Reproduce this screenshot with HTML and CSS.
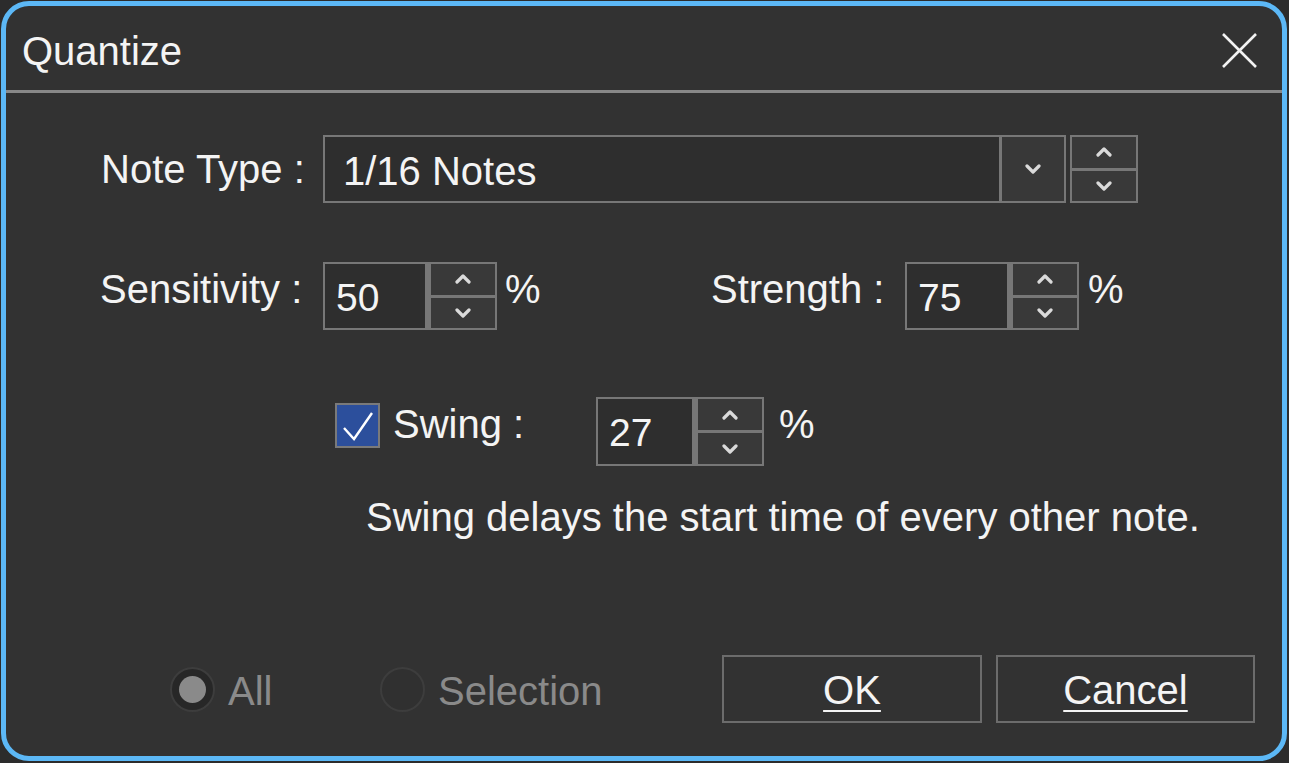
FILE: index.html
```html
<!DOCTYPE html>
<html lang="en">
<head>
    <meta charset="UTF-8">
    <title>Quantize</title>
    <link rel="stylesheet" href="styles.css">
</head>
<body>

<div class="dialog">
    <div class="titlebar">
        <span class="title">Quantize</span>
        <button class="close" aria-label="Close">
            <svg width="35" height="35" viewBox="0 0 35 35"><path d="M1 1 L34 34 M34 1 L1 34" stroke="#f2f2f2" stroke-width="2.6" fill="none"/></svg>
        </button>
    </div>

    <div class="content">
        <div class="row row-type">
            <label class="field-label label-type">Note Type :</label>
            <div class="select">
                <div class="select-value">1/16 Notes</div>
                <div class="select-arrow">
                    <svg width="18" height="10" viewBox="0 0 18 10"><path d="M3 2 L9 8 L15 2" class="chev"/></svg>
                </div>
            </div>
            <div class="steps steps-boxed">
                <button><svg width="18" height="10" viewBox="0 0 18 10"><path d="M3 8 L9 2 L15 8" class="chev"/></svg></button>
                <button><svg width="18" height="10" viewBox="0 0 18 10"><path d="M3 2 L9 8 L15 2" class="chev"/></svg></button>
            </div>
        </div>

        <div class="row row-values">
            <div class="group group-sens">
                <label class="field-label label-sens">Sensitivity :</label>
                <div class="spin">
                    <div class="spin-value">50</div>
                    <div class="steps">
                        <button><svg width="18" height="10" viewBox="0 0 18 10"><path d="M3 8 L9 2 L15 8" class="chev"/></svg></button>
                        <button><svg width="18" height="10" viewBox="0 0 18 10"><path d="M3 2 L9 8 L15 2" class="chev"/></svg></button>
                    </div>
                </div>
                <span class="unit">%</span>
            </div>
            <div class="group">
                <label class="field-label label-strength">Strength :</label>
                <div class="spin">
                    <div class="spin-value">75</div>
                    <div class="steps">
                        <button><svg width="18" height="10" viewBox="0 0 18 10"><path d="M3 8 L9 2 L15 8" class="chev"/></svg></button>
                        <button><svg width="18" height="10" viewBox="0 0 18 10"><path d="M3 2 L9 8 L15 2" class="chev"/></svg></button>
                    </div>
                </div>
                <span class="unit unit-strength">%</span>
            </div>
        </div>

        <div class="row row-swing">
            <span class="checkbox">
                <svg width="41" height="41" viewBox="0 0 41 41"><path d="M7 23 L17 34 L35 8" stroke="#fff" stroke-width="2.4" fill="none"/></svg>
            </span>
            <label class="field-label label-swing">Swing :</label>
            <div class="spin spin-swing">
                <div class="spin-value">27</div>
                <div class="steps">
                    <button><svg width="18" height="10" viewBox="0 0 18 10"><path d="M3 8 L9 2 L15 8" class="chev"/></svg></button>
                    <button><svg width="18" height="10" viewBox="0 0 18 10"><path d="M3 2 L9 8 L15 2" class="chev"/></svg></button>
                </div>
            </div>
            <span class="unit unit-swing">%</span>
        </div>

        <p class="hint">Swing delays the start time of every other note.</p>

        <div class="footer">
            <div class="radio-item radio-all">
                <span class="radio radio-on"><span class="radio-dot"></span></span>
                <span class="radio-text">All</span>
            </div>
            <div class="radio-item radio-sel">
                <span class="radio"></span>
                <span class="radio-text">Selection</span>
            </div>
            <button class="btn">OK</button>
            <button class="btn btn-cancel">Cancel</button>
        </div>
    </div>
</div>

</body>
</html>
```
FILE: styles.css
```css
* {
    box-sizing: border-box;
}
body {
    margin: 0;
    background: #2c2c2c;
    font-family: "Liberation Sans", Arial, Helvetica, sans-serif;
    color: #f4f4f4;
}
button {
    font-family: inherit;
    color: inherit;
}
.dialog {
    margin: 1px 0 0 1px;
    width: 1286px;
    height: 760px;
    border: 5px solid #5cb8f6;
    border-radius: 28px;
    background: #323232;
    overflow: hidden;
    display: flex;
    flex-direction: column;
}
.titlebar {
    height: 87px;
    border-bottom: 3px solid #888;
    display: flex;
    align-items: center;
    justify-content: space-between;
    padding: 5px 25px 0 16px;
}
.title {
    font-size: 40px;
    line-height: 1;
}
.close {
    width: 35px;
    height: 35px;
    padding: 0;
    border: 0;
    background: none;
}
.close svg {
    display: block;
}
.content {
    padding-top: 42px;
    display: flex;
    flex-direction: column;
}
.row {
    display: flex;
    align-items: center;
}
.field-label {
    font-size: 40px;
    line-height: 46px;
    white-space: nowrap;
}
.chev {
    fill: none;
    stroke: #dadada;
    stroke-width: 3.2;
    stroke-linecap: round;
    stroke-linejoin: round;
}

/* note type row */
.row-type {
    height: 68px;
    padding-left: 95px;
}
.label-type {
    width: 222px;
}
.select {
    display: flex;
    width: 743px;
    height: 68px;
    border: 2px solid #777;
    background: #2e2e2e;
}
.select-value {
    flex: 1;
    display: flex;
    align-items: center;
    padding: 4px 0 0 18px;
    font-size: 40px;
}
.select-arrow {
    width: 65px;
    border-left: 3px solid #777;
    background: #383838;
    display: flex;
    align-items: center;
    justify-content: center;
}
.steps {
    width: 64px;
    display: grid;
    grid-template-rows: 1fr 1fr;
    gap: 3px;
}
.steps button {
    border: 0;
    padding: 0;
    background: #393939;
    display: flex;
    align-items: center;
    justify-content: center;
}
.steps-boxed {
    width: 68px;
    height: 68px;
    margin-left: 4px;
    padding: 2px;
    background: #777;
}

/* spin boxes */
.spin {
    display: flex;
    gap: 6px;
    width: 174px;
    height: 68px;
    padding: 2px;
    background: #777;
}
.spin-value {
    width: 100px;
    background: #2e2e2e;
    display: flex;
    align-items: center;
    padding: 3px 0 0 11px;
    font-size: 39px;
}
.unit {
    font-size: 40px;
    line-height: 46px;
    margin: 0 0 14px 8px;
}

.row-values {
    margin-top: 59px;
    padding-left: 94px;
}
.group {
    display: flex;
    align-items: center;
}
.group-sens {
    width: 611px;
}
.label-sens {
    width: 223px;
    margin-bottom: 14px;
}
.label-strength {
    width: 194px;
    margin-bottom: 14px;
}
.unit-strength {
    margin-left: 9px;
}

/* swing row */
.row-swing {
    margin-top: 67px;
    height: 69px;
    padding-left: 329px;
}
.checkbox {
    width: 45px;
    height: 45px;
    border: 2px solid #7a7a7a;
    background: #2c4f9c;
    margin-bottom: 12px;
}
.checkbox svg {
    display: block;
}
.label-swing {
    width: 216px;
    padding-left: 13px;
    margin-bottom: 16px;
}
.spin-swing {
    width: 168px;
    height: 69px;
}
.spin-swing .spin-value {
    width: 94px;
}
.unit-swing {
    margin: 0 0 15px 15px;
}

.hint {
    margin: 28px 0 0 360px;
    font-size: 40px;
    line-height: 46px;
}

/* footer */
.footer {
    margin-top: 115px;
    height: 68px;
    padding-left: 164px;
    display: flex;
    align-items: center;
}
.radio-item {
    display: flex;
    align-items: center;
}
.radio-all {
    width: 210px;
}
.radio-sel {
    width: 342px;
}
.radio {
    width: 45px;
    height: 45px;
    border-radius: 50%;
    border: 2px solid #3d3d3d;
    background: #303030;
    display: flex;
    align-items: center;
    justify-content: center;
}
.radio-on {
    background: #272727;
}
.radio-dot {
    width: 27px;
    height: 27px;
    border-radius: 50%;
    background: #8a8a8a;
}
.radio-text {
    margin-left: 13px;
    padding-top: 4px;
    font-size: 40px;
    color: #8a8a8a;
}
.btn {
    width: 260px;
    height: 68px;
    padding-top: 4px;
    border: 2px solid #6c6c6c;
    background: transparent;
    font-size: 40px;
    text-decoration: underline;
    text-decoration-thickness: 2px;
    text-underline-offset: 6px;
}
.btn-cancel {
    width: 259px;
    margin-left: 14px;
}
```
